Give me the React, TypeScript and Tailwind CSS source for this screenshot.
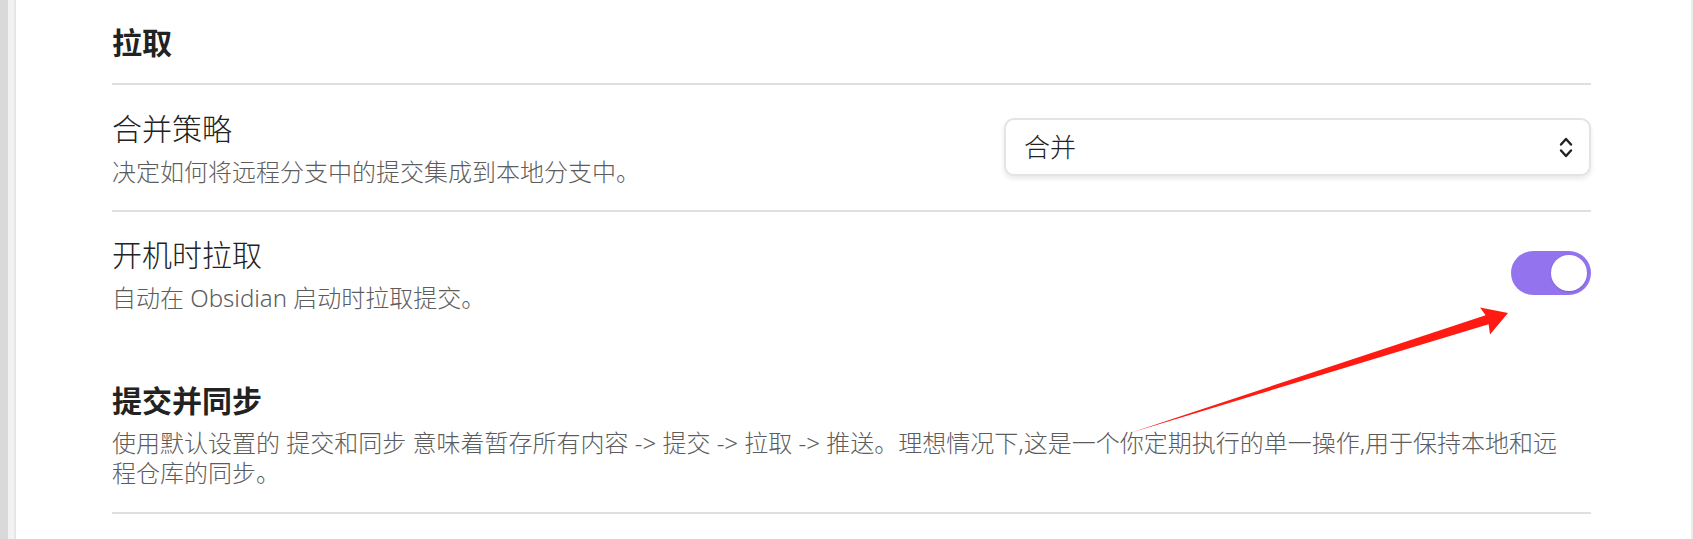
import React, { useState } from 'react';

const font = { fontFamily: '"Noto Sans", "Noto Sans CJK SC", sans-serif' };

const Toggle = ({ on, onChange }: { on: boolean; onChange: () => void }) => (
  <button
    onClick={onChange}
    className={`w-[80px] h-[44px] rounded-full p-[4px] flex items-center transition ${
      on ? 'bg-[#9373ee] justify-end' : 'bg-[#d8d8d8] justify-start'
    }`}
  >
    <span className="block w-[36px] h-[36px] rounded-full bg-white shadow-[0_1px_2px_rgba(0,0,0,0.15)]" />
  </button>
);

const Dropdown = ({ value }: { value: string }) => (
  <div className="w-[587px] h-[58px] rounded-[10px] bg-white border-2 border-[#e4e4e4] shadow-[0_3px_5px_rgba(0,0,0,0.09)] flex items-center justify-between pl-[18px] pr-[16px]">
    <span className="text-[26px] leading-[34px] font-light text-[#222]">{value}</span>
    <svg width="14" height="23" viewBox="0 0 14 23" fill="none" stroke="#222" strokeWidth="2.4" strokeLinecap="round" strokeLinejoin="round">
      <path d="M2 8.5 L7 3 L12 8.5" />
      <path d="M2 14.5 L7 20 L12 14.5" />
    </svg>
  </div>
);

const App = () => {
  const [pullOnBoot, setPullOnBoot] = useState(true);

  return (
    <div className="relative w-full h-[539px] bg-white flex overflow-hidden" style={font}>
      {/* left edge */}
      <div className="w-[8px] bg-[#d9d9d9]" />
      <div className="w-[6px] bg-[#f2f2f2]" />
      <div className="w-[2px] bg-[#e6e6e6]" />

      <main className="flex-1 pl-[96px] pr-[100px] border-r-2 border-[#ececec]">
        {/* 拉取 heading */}
        <div className="h-[85px] pt-[23px] border-b-2 border-[#e0e0e0]">
          <h2 className="text-[30px] leading-[40px] font-semibold text-[#222]">拉取</h2>
        </div>

        {/* 合并策略 */}
        <div className="h-[127px] border-b-2 border-[#e0e0e0] flex items-start justify-between">
          <div className="pt-[24px]">
            <div className="text-[30px] leading-[40px] font-light text-[#222]">合并策略</div>
            <div className="mt-[8px] text-[24px] leading-[30px] font-light text-[#5c5c5c]">决定如何将远程分支中的提交集成到本地分支中。</div>
          </div>
          <div className="mt-[33px]">
            <Dropdown value="合并" />
          </div>
        </div>

        {/* 开机时拉取 */}
        <div className="h-[125px] flex items-start justify-between">
          <div className="pt-[23px]">
            <div className="text-[30px] leading-[40px] font-light text-[#222]">开机时拉取</div>
            <div className="mt-[8px] text-[24px] leading-[30px] font-light text-[#5c5c5c]">自动在 Obsidian 启动时拉取提交。</div>
          </div>
          <div className="mt-[39px]">
            <Toggle on={pullOnBoot} onChange={() => setPullOnBoot(!pullOnBoot)} />
          </div>
        </div>

        {/* 提交并同步 heading */}
        <div className="pt-[44px] pb-[24px] border-b-2 border-[#e0e0e0]">
          <h2 className="text-[30px] leading-[40px] font-semibold text-[#222]">提交并同步</h2>
          <p className="mt-[7px] text-[24px] leading-[30px] font-light text-[#5c5c5c]">
            <span className="whitespace-nowrap">
              使用默认设置的 提交和同步 意味着暂存所有内容 -&gt; 提交 -&gt; 拉取 -&gt; 推送。理想情况下,这是一个你定期执行的单一操作,用于保持本地和远
            </span>
            <br />
            程仓库的同步。
          </p>
        </div>
      </main>

      {/* red annotation arrow */}
      <svg className="absolute inset-0 pointer-events-none" width="1693" height="539" viewBox="0 0 1693 539">
        <polygon
          points="1130,433 1488.6,324.2 1490,334.5 1508,313 1480,307.5 1485.6,315.2"
          fill="#ff1a12"
        />
      </svg>
    </div>
  );
};

export default App;
